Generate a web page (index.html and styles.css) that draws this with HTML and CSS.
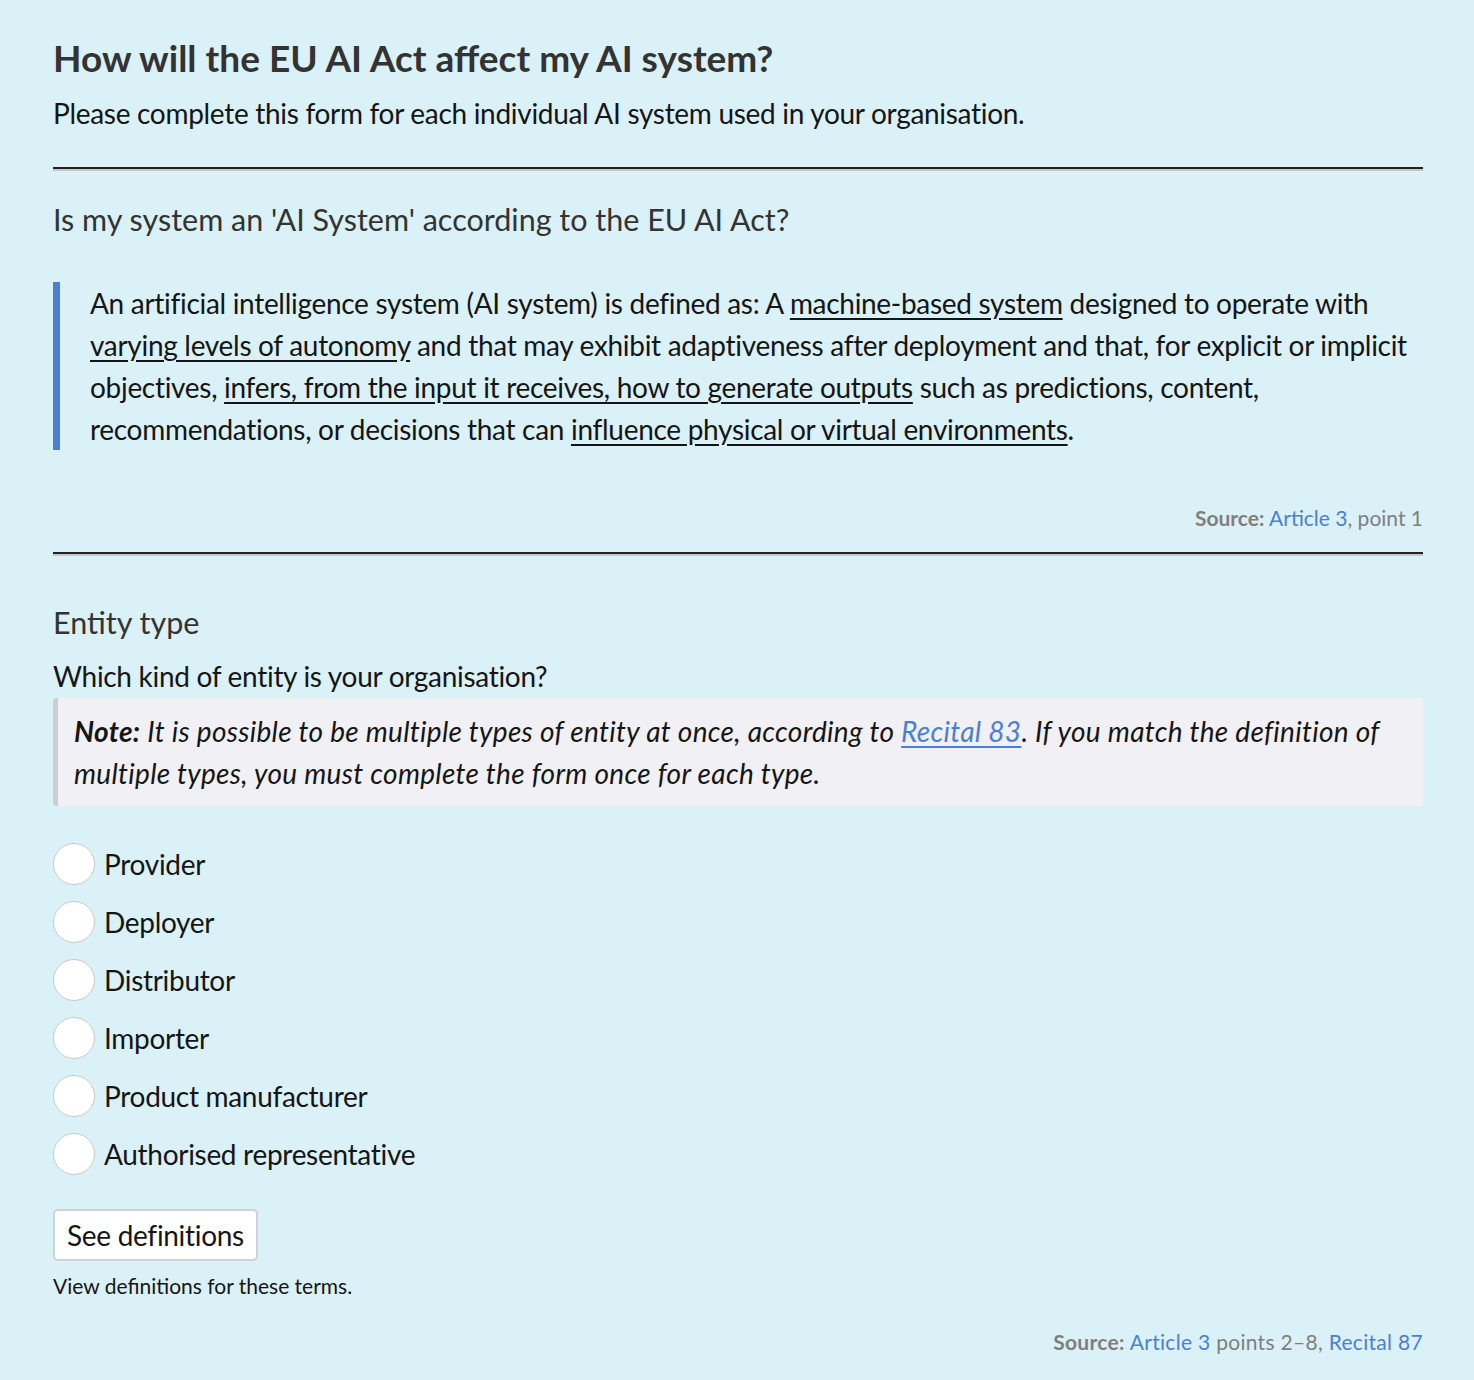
FILE: index.html
```html
<!DOCTYPE html>
<html lang="en">
<head>
<meta charset="utf-8">
<title>EU AI Act</title>
<link rel="stylesheet" href="styles.css">
</head>
<body>
<main class="page">
  <h1 class="title">How will the EU AI Act affect my AI system?</h1>
  <p class="lead">Please complete this form for each individual AI system used in your organisation.</p>
  <hr class="rule">
  <section class="section">
    <h2 class="heading">Is my system an 'AI System' according to the EU AI Act?</h2>
    <blockquote class="quote">An artificial intelligence system (AI system) is defined as: A <u>machine-based system</u> designed to operate with <u>varying levels of autonomy</u> and that may exhibit adaptiveness after deployment and that, for explicit or implicit objectives, <u>infers, from the input it receives, how to generate outputs</u> such as predictions, content, recommendations, or decisions that can <u>influence physical or virtual environments</u>.</blockquote>
    <p class="source"><b>Source:</b> <a href="#">Article 3</a>, point 1</p>
  </section>
  <hr class="rule rule-second">
  <section class="section entity">
    <h2 class="heading">Entity type</h2>
    <p class="question">Which kind of entity is your organisation?</p>
    <div class="note"><b>Note:</b> It is possible to be multiple types of entity at once, according to <a href="#">Recital 83</a>. If you match the definition of multiple types, you must complete the form once for each type.</div>
    <ul class="radios">
      <li class="radio"><span class="circle"></span>Provider</li>
      <li class="radio"><span class="circle"></span>Deployer</li>
      <li class="radio"><span class="circle"></span>Distributor</li>
      <li class="radio"><span class="circle"></span>Importer</li>
      <li class="radio"><span class="circle"></span>Product manufacturer</li>
      <li class="radio"><span class="circle"></span>Authorised representative</li>
    </ul>
    <button class="btn" type="button">See definitions</button>
    <p class="help">View definitions for these terms.</p>
    <p class="source source-wide"><b>Source:</b> <a href="#">Article 3</a> points 2–8, <a href="#">Recital 87</a></p>
  </section>
</main>
</body>
</html>
```
FILE: styles.css
```css
html, body {
  margin: 0;
  padding: 0;
  background: #dbf1f8;
}
body {
  font-family: "Lato", "Liberation Sans", sans-serif;
  color: #151515;
  letter-spacing: -0.3px;
}
.page {
  padding: 36px 51px 24px 53px;
}
.title {
  margin: 0;
  font-size: 37px;
  line-height: 44px;
  font-weight: 700;
  color: #333;
  letter-spacing: 0;
}
.lead {
  margin: 12px 0 0;
  font-size: 28px;
  line-height: 42px;
}
.rule {
  margin: 33px 0 0;
  border: 0;
  height: 2px;
  background: #222;
  box-shadow: 0 2px 0 #c8c8c8;
}
.rule-second {
  margin-top: 19px;
}
.section {
  padding-top: 30px;
}
.heading {
  margin: 0;
  font-size: 30.5px;
  line-height: 40px;
  font-weight: 400;
  color: #333;
  letter-spacing: 0;
}
.quote {
  margin: 43px 0 0;
  padding: 0 0 0 30px;
  border-left: 7px solid #4b7fd4;
  font-size: 28px;
  line-height: 42px;
}
.quote u {
  text-underline-offset: 4px;
}
.source {
  margin: 53px 0 0;
  text-align: right;
  font-size: 21px;
  line-height: 30px;
  color: #7f7f7f;
  letter-spacing: 0;
}
.source-wide {
  letter-spacing: 0.3px;
}
.source a {
  color: #4b7fd4;
  text-decoration: none;
}
.entity {
  padding-top: 48px;
}
.question {
  margin: 13px 0 0;
  font-size: 28px;
  line-height: 42px;
}
.note {
  margin-top: 1px;
  padding: 12px 20px 12px 16px;
  background: #f0f0f5;
  border-left: 5px solid #cdcdd2;
  border-radius: 4px;
  font-style: italic;
  font-size: 28px;
  line-height: 42px;
  letter-spacing: 0.3px;
}
.note a {
  color: #4b7fd4;
  text-underline-offset: 4px;
}
.radios {
  list-style: none;
  margin: 37px 0 0;
  padding: 0;
  display: flex;
  flex-direction: column;
  gap: 16px;
}
.radio {
  display: flex;
  align-items: center;
  gap: 9px;
  font-size: 28px;
  line-height: 42px;
}
.circle {
  width: 40px;
  height: 40px;
  border: 1px solid #c9c9c9;
  border-radius: 50%;
  background: #fff;
  flex: none;
}
.btn {
  display: block;
  margin-top: 34px;
  padding: 7px 12px;
  font-family: "Lato", sans-serif;
  font-size: 28px;
  line-height: 34px;
  letter-spacing: -0.3px;
  color: #151515;
  background: #fff;
  border: 2px solid #d2d2d6;
  border-radius: 5px;
}
.help {
  margin: 10px 0 0;
  font-size: 21px;
  line-height: 30px;
  letter-spacing: 0;
}
.entity .source {
  margin-top: 26px;
}
```
